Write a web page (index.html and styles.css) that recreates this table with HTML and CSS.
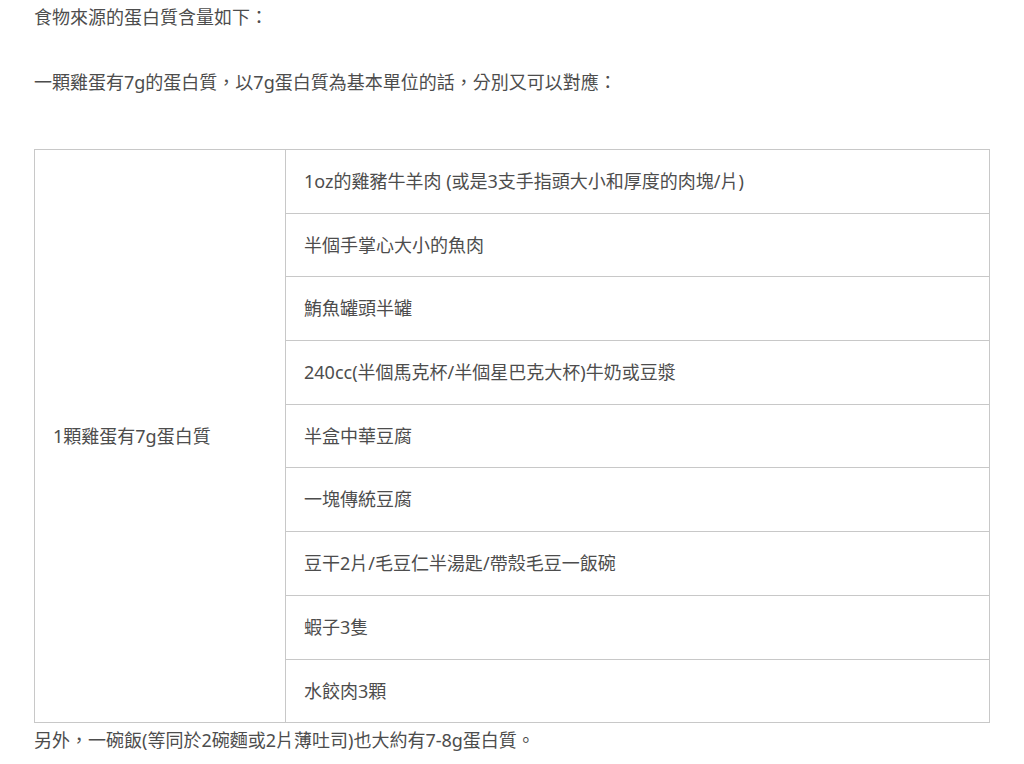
FILE: index.html
```html
<!DOCTYPE html>
<html lang="zh-Hant">
<head>
<meta charset="utf-8">
<title>蛋白質含量</title>
<link rel="stylesheet" href="styles.css">
</head>
<body>
<div class="article">
  <p class="intro">食物來源的蛋白質含量如下：</p>
  <p class="lead">一顆雞蛋有7g的蛋白質，以7g蛋白質為基本單位的話，分別又可以對應：</p>
  <table class="protein">
    <tbody>
      <tr>
        <td class="key" rowspan="9">1顆雞蛋有7g蛋白質</td>
        <td>1oz的雞豬牛羊肉 (或是3支手指頭大小和厚度的肉塊/片)</td>
      </tr>
      <tr><td>半個手掌心大小的魚肉</td></tr>
      <tr><td>鮪魚罐頭半罐</td></tr>
      <tr><td>240cc(半個馬克杯/半個星巴克大杯)牛奶或豆漿</td></tr>
      <tr><td>半盒中華豆腐</td></tr>
      <tr><td>一塊傳統豆腐</td></tr>
      <tr><td>豆干2片/毛豆仁半湯匙/帶殼毛豆一飯碗</td></tr>
      <tr><td>蝦子3隻</td></tr>
      <tr><td>水餃肉3顆</td></tr>
    </tbody>
  </table>
  <p class="note">另外，一碗飯(等同於2碗麵或2片薄吐司)也大約有7-8g蛋白質。</p>
</div>
</body>
</html>
```

FILE: styles.css
```css
html, body {
  margin: 0;
  padding: 0;
  background: #ffffff;
}

body {
  font-family: "Noto Sans", "Noto Sans CJK TC", sans-serif;
  font-size: 18px;
  line-height: 25px;
  color: #4d4d4d;
}

.article {
  width: 955px;
  padding: 5px 0 0 34px;
}

.article p {
  margin: 0;
}

.intro {
  margin-bottom: 40px !important;
}

.lead {
  margin-bottom: 54px !important;
}

.protein {
  width: 956px;
  border-collapse: collapse;
  table-layout: fixed;
}

.protein td {
  border: 1px solid #c8c8c8;
  padding: 19px 18px 18.7px;
  line-height: 25px;
  height: 25px;
  vertical-align: middle;
  text-align: left;
}

.protein td.key {
  width: 214px;
}

.note {
  margin-top: 5px !important;
}
```
